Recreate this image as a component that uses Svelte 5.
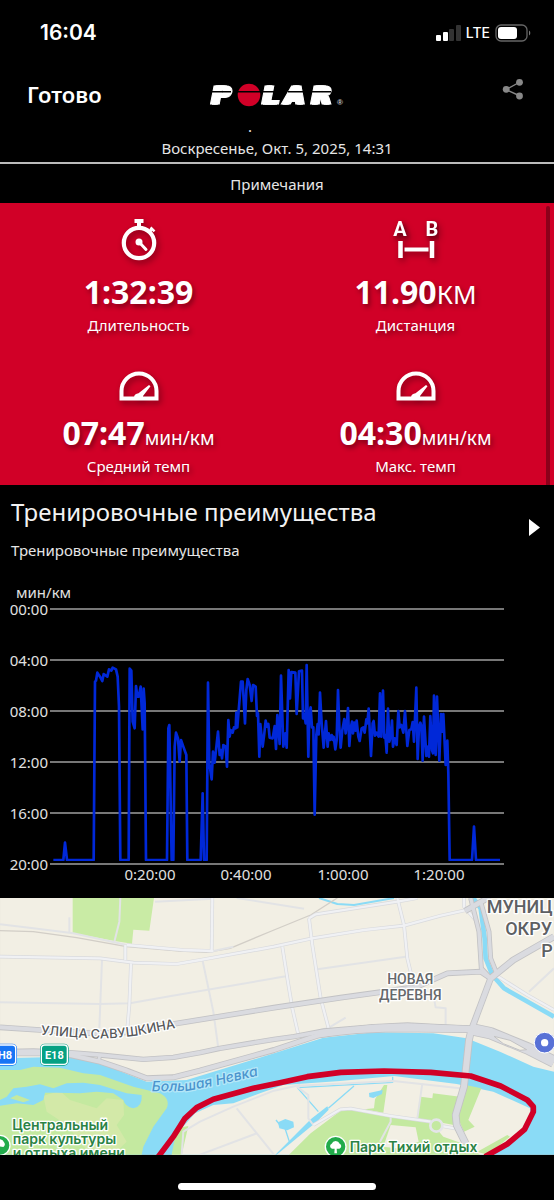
<script>
    const metrics = [
        { icon: "stopwatch", value: "1:32:39", unit: "", label: "Длительность" },
        { icon: "distance", value: "11.90", unit: "КМ", label: "Дистанция", big: true },
        { icon: "gauge", value: "07:47", unit: "мин/км", label: "Средний темп" },
        { icon: "gauge", value: "04:30", unit: "мин/км", label: "Макс. темп" },
    ];

    const paceTicks = ["00:00", "04:00", "08:00", "12:00", "16:00", "20:00"];

    const timeTicks = [
        { x: 150, label: "0:20:00" },
        { x: 246, label: "0:40:00" },
        { x: 343, label: "1:00:00" },
        { x: 439, label: "1:20:00" },
    ];

    // the trace is stored in three legs, three units to a chart pixel
    const legs = [
        {
            start: 0,
            samples: "160,660 190,660 195,608 201,660 281,660 285,125 288,122 292,98 300,110 307,123 311,102 322,110 327,88 334,92 338,83 348,88 353,110 357,200 361,660 386,660 389,86 394,92 398,245 404,265 408,138 412,170 416,170 422,140 428,268 431,146 434,190 438,660 501,660 505,265 508,255 515,660 520,660 524,320 528,278 534,295 539,365 543,300 550,320 559,345 562,660",
        },
        {
            start: 570,
            samples: "0,660 32,660 38,460 42,660 50,660 54,128 58,370 65,418 69,335 74,368 84,275 89,345 93,330 96,355 100,315 107,320 111,380 115,240 119,290 122,270 128,278 132,262 137,265 139,218 142,262 153,125 158,125 165,250 169,150 173,117 179,135 185,183 189,135 197,140 201,228 204,220 208,350 211,252 218,320 223,280 227,242 231,260 235,252 239,293 248,295 254,258 258,327 262,225 269,312 273,107 280,320 286,280 290,323 296,90 300,175 304,96 316,98 320,222 327,94 336,92 339,235 343,222 347,250 350,75 355,350 358,225 362,202 366,262 370,262 374,524 379,285 383,252 386,283 390,158 395,250 401,323 408,243 413,320 416,280 420,300 425,285 428,300 431,290 436,328 440,300 444,150 448,260 452,323 457,270 463,237 467,280 471,245 474,204 478,318 482,265 486,245 489,280 493,248 497,272 500,242 505,290 509,303 515,265 520,262 524,278 529,238 532,250",
        },
        {
            start: 1080,
            samples: "26,206 33,348 38,250 41,243 45,287 50,278 56,290 60,160 64,290 69,152 73,293 76,285 80,338 84,206 88,305 92,290 96,242 99,320 104,295 110,315 115,213 119,262 124,255 130,278 135,213 142,318 148,270 154,268 158,246 162,305 169,143 173,357 177,260 181,248 184,258 188,362 192,230 199,348 204,320 207,350 211,228 216,330 219,340 222,167 227,345 231,170 238,362 243,222 246,275 250,222 257,375 262,302 265,400 269,660 336,660 342,560 348,660 420,660",
        },
    ];

    const trace = legs
        .map((leg) =>
            leg.samples
                .split(" ")
                .map((s) => {
                    const [x, y] = s.split(",").map(Number);
                    return `${x + leg.start},${y}`;
                })
                .join(" ")
        )
        .join(" ");

    const streets = [
        "M0,88 L100,100 220,115 380,150 550,165 640,168 700,155",
        "M208,67 V112",
        "M361,9 L358,80 343,140",
        "M306,195 L298,400",
        "M608,198 L640,350 655,460",
        "M0,322 L300,327 390,325 500,305 840,247 862,243",
        "M465,20 L640,11",
        "M710,9 L912,41",
        "M952,223 L1217,185",
        "M1302,310 L1307,337 1337,340 V390",
        "M942,410 L987,398 1037,368",
        "M1587,290 L1662,220",
        "M545,779 L550,710 600,680 700,635 822,587 900,570",
        "M710,640 L822,779",
        "M600,779 L770,715",
        "M892,572 L1180,558 1380,580",
        "M890,575 L925,600 V670 L940,690",
        "M1267,565 L1252,670",
        "M1172,665 V680 L1140,740",
    ];

    const avenues = [
        "M0,185 L300,190 400,203 530,207 600,195 822,155 937,130 1092,105 1212,92 1322,62 1422,40",
        "M637,9 L635,165",
        "M380,150 L550,165 640,168",
        "M376,150 V195",
        "M393,205 L388,330 382,400",
        "M847,155 L862,250 877,340 894,415",
        "M927,70 L937,150 962,310 987,405",
        "M927,70 L947,58 1192,20 1252,9",
        "M1192,9 L1212,90 1222,190 1234,240",
        "M1487,240 L1582,300 1662,345",
        "M1392,9 V35 L1427,75",
        "M940,690 L1022,643 1052,641 1172,663 1292,680",
        "M1325,693 L1365,700",
    ];

    const highways = [
        { d: "M0,397 L120,405 280,415 380,412 515,388 822,338 1022,308 1152,290 1252,275 1342,235 1442,230 1472,250", width: 12 },
        { d: "M0,470 L100,468 200,472 300,480 430,493 520,487 600,473 660,460 822,433 882,425 972,408 1122,395 1222,390 1412,400", width: 11 },
        { d: "M0,475 H150 L210,480 300,500 380,527 440,550 520,547 600,527 822,465 952,422 1022,410 1172,403 1412,405", width: 13 },
        { d: "M952,418 L1122,399 1222,396 1412,402", width: 18 },
        { d: "M300,480 L295,500", width: 8 },
        { d: "M1412,402 L1472,415 1582,460 1662,500", width: 32 },
        { d: "M1472,250 L1415,402 ", width: 15 },
        { d: "M1472,250 L1540,195 1662,125", width: 16 },
        { d: "M1412,9 L1437,110 1444,220 1472,250", width: 10 },
        { d: "M1442,20 L1467,110 1472,190 1492,240", width: 10 },
        { d: "M1395,48 L1470,5", width: 14 },
        { d: "M1415,400 L1407,435 1392,575 1367,660 1370,690 1397,745", width: 18 },
    ];
</script>

<main>
    <div class="status">
        <span class="time">16:04</span>
        <div class="signals">
            <svg width="25" height="18" viewBox="0 0 25 18" aria-hidden="true">
                <rect x="0" y="11" width="5" height="6" rx="1" fill="#fff" />
                <rect x="7" y="8" width="5" height="9" rx="1" fill="#fff" />
                <rect x="13" y="5" width="5" height="12" rx="1" fill="#333" />
                <rect x="20" y="1" width="5" height="16" rx="1" fill="#333" />
            </svg>
            <span>LTE</span>
            <svg width="36" height="18" viewBox="0 0 36 18" aria-hidden="true">
                <rect x="1" y="1" width="31" height="16" rx="5" fill="none" stroke="#666" stroke-width="1.3" />
                <rect x="3" y="3" width="19" height="12" rx="3" fill="#fff" />
                <path d="M34 6.5v5a3 3 0 0 0 0-5z" fill="#777" />
            </svg>
        </div>
    </div>

    <header>
        <button class="done">Готово</button>
        <svg class="logo" width="136" height="32" viewBox="0 0 136 32" role="img" aria-label="Polar">
            <g class="wordmark">
                <text x="2" y="26">P</text>
                <text x="53" y="26">L</text>
                <text x="75" y="26">A</text>
                <text x="102" y="26">R</text>
            </g>
            <circle cx="41" cy="17" r="11.3" fill="#d10027" />
            <path d="M2 13.800H23M29 13.800H68M80 13.800H98M102 13.800H123" stroke="#000" stroke-width="1.6" />
            <text class="reg" x="129" y="27">®</text>
        </svg>
        <button class="share" aria-label="Поделиться">
            <svg width="22" height="22" viewBox="0 0 22 22">
                <path d="M18 4L4 11.5 18 18" fill="none" stroke="#888" stroke-width="1.4" />
                <circle cx="17.5" cy="4.3" r="3.4" fill="#888" />
                <circle cx="4.2" cy="11.3" r="3.4" fill="#888" />
                <circle cx="17.5" cy="18" r="3.4" fill="#888" />
            </svg>
        </button>
    </header>

    <p class="name">.</p>
    <p class="date">Воскресенье, Окт. 5, 2025, 14:31</p>
    <p class="notes">Примечания</p>

    <section class="metrics">
        {#each metrics as m}
            <div class="metric">
                <div class="icon">
                    {#if m.icon == "stopwatch"}
                        <svg width="40" height="44" viewBox="0 0 40 44" aria-hidden="true">
                            <circle cx="20" cy="26" r="15.2" fill="none" stroke="#fff" stroke-width="4.2" />
                            <path d="M15.500 2h9v4h-2.500v6h-4V6h-2.500z" fill="#fff" />
                            <path d="M30 15l3-3" stroke="#fff" stroke-width="3" />
                            <path d="M31.500 10.500l4 3.800" stroke="#fff" stroke-width="2.500" />
                            <circle cx="20" cy="25" r="3.500" fill="#fff" />
                            <path d="M20 25l7 7.500" stroke="#fff" stroke-width="3" stroke-linecap="round" />
                        </svg>
                    {:else if m.icon == "distance"}
                        <svg width="46" height="44" viewBox="0 0 46 44" aria-hidden="true">
                            <text class="ab" x="7" y="19" text-anchor="middle">A</text>
                            <text class="ab" x="39" y="19" text-anchor="middle">B</text>
                            <path d="M7.500 24v17M39 24v17" stroke="#fff" stroke-width="4.500" />
                            <path d="M11.500 32.500h24" stroke="#fff" stroke-width="4" />
                        </svg>
                    {:else}
                        <svg width="42" height="44" viewBox="0 0 42 44" aria-hidden="true">
                            <path d="M3.500 40.500V33a17.300 17.300 0 0 1 35 0v7.500z" fill="none" stroke="#fff" stroke-width="4" />
                            <path d="M16 39.500c0-2.500 2-4 4.500-4.300L31 27l1.500 1.300L25 38v1.500h-9z" fill="#fff" />
                        </svg>
                    {/if}
                </div>
                <p class="value">{m.value}<span class="unit" class:big={m.big}>{m.unit}</span></p>
                <p class="label">{m.label}</p>
            </div>
        {/each}
        <div class="scrollbar"></div>
    </section>

    <section class="benefit">
        <div>
            <h2>Тренировочные преимущества</h2>
            <p>Тренировочные преимущества</p>
        </div>
        <button class="more" aria-label="Подробнее">
            <svg width="12" height="18" viewBox="0 0 12 18"><path d="M0 0L11 8.500 0 17z" fill="#fff" /></svg>
        </button>
    </section>

    <svg class="chart" viewBox="0 0 554 318" role="img" aria-label="Темп">
        <defs>
            <clipPath id="plot"><rect x="0" y="0" width="1662" height="663" /></clipPath>
        </defs>
        <text x="16" y="18">мин/км</text>
        {#each paceTicks as tick, i}
            <line x1="50" x2="504" y1={29 + i * 51} y2={29 + i * 51} />
            <text x="48" y={35 + i * 51} text-anchor="end">{tick}</text>
        {/each}
        {#each timeTicks as tick}
            <text x={tick.x} y="300" text-anchor="middle">{tick.label}</text>
        {/each}
        <g transform="translate(0 60) scale(.33333)" clip-path="url(#plot)">
            <polyline points={trace} />
        </g>
    </svg>

    <svg class="map" viewBox="0 9 1662 770" role="img" aria-label="Карта маршрута">
        <defs>
            <path id="savushkina" d="M122,419 L190,424 280,431 350,429 400,423 560,393" />
            <path id="nevka" d="M455,589 L560,588 640,573 860,522" />
        </defs>
        <rect y="9" width="1662" height="770" fill="#f2efe4" />
        <path d="M218,9H462L448,107 400,104 396,146 344,138 218,114z" fill="#c9eba5" />

        <!-- river -->
        <path d="M0,490L200,485 300,505 440,560 560,555 822,475 970,428 1122,412 1300,415 1400,430 1500,470 1600,515 1662,530V779H0z" fill="#8adbf6" />
        <path d="M1420,9L1442,40 1454,130 1457,190 1477,240 1512,280 1662,365" class="canal" />
        <path d="M957,9L1012,27 1062,30 1182,9" class="brook" />

        <!-- west park -->
        <path d="M0,525L60,525 100,515 180,518 250,535 300,540 400,575 480,595Q512,612 500,640L460,695 430,755 425,779H0z" fill="#c4e9a0" />
        <path d="M130,602L180,588 210,615 290,640 320,610 370,615 372,660 350,690 380,740 340,779H270L200,690 140,650z" fill="#d3e9a8" />
        <path d="M0,615L20,605 40,580 80,575 120,568 160,580 200,565 250,563 300,570 380,595 425,600Q428,635 400,640 375,635 370,615L340,595 290,590 240,595 170,593 135,593 130,615 100,630 50,625 0,632z" fill="#8adbf6" />
        <path d="M30,610L50,600 90,615 70,622z" fill="#c4e9a0" />

        <!-- island -->
        <path d="M515,779L545,700 585,655 640,630 700,625 780,595 850,570 1020,558 1182,543 1370,567 1480,590 1590,640 1590,660 1560,710 1540,730 1480,779z" fill="#f2efe4" />
        <path d="M515,779L530,700 565,693 545,779z" fill="#c4e9a0" />
        <path d="M867,779L932,715 1022,647 1052,643 1172,665 1292,680 1330,725 1400,750 1440,779z" fill="#c4e9a0" />
        <path d="M1172,690L1247,697 1256,740 1190,760 1150,755z" fill="#f2efe4" />
        <path d="M1152,570H1162L1150,653 1092,643 1122,640 1125,613z" fill="#c4e9a0" />
        <path d="M1262,605L1297,610 1299,595 1380,605 1362,690 1252,670z" fill="#c4e9a0" />
        <path d="M1397,570L1444,580 1405,675 1424,695 1392,710 1372,665z" fill="#c4e9a0" />
        <path d="M1432,770L1522,720 1530,725 1462,779z" fill="#c4e9a0" />
        <path d="M933,672L982,634 986,644 950,680 830,779H826z" fill="#8adbf6" />
        <path d="M1107,594L1148,585 1146,597 1120,609 1108,606z" fill="#8adbf6" />
        <path d="M834,682L856,672 880,680 882,697 862,706 838,700z" fill="#8adbf6" />
        <path d="M892,578L955,650M892,578L1178,562V545M1062,573L985,640M855,700L868,740M828,675L840,690" class="ditch" />

        <path d="M0,107L100,110 230,128 380,155 540,168 620,172 690,160 822,105 932,60 1012,9" class="rail" />
        {#each streets as d}<path {d} class="street" />{/each}
        {#each avenues as d}<path {d} class="avenue-edge" />{/each}
        {#each avenues as d}<path {d} class="avenue" />{/each}
        <circle cx="1309" cy="692" r="18" fill="#c4e9a0" stroke="#e4e5e9" stroke-width="8" />
        {#each highways as h}<path d={h.d} fill="none" stroke="#c2c2c4" stroke-width={h.width + 5} stroke-linejoin="round" />{/each}
        {#each highways as h}<path d={h.d} fill="none" stroke="#dadbe0" stroke-width={h.width} stroke-linejoin="round" />{/each}
        <path d="M1482,424L1530,436 1580,464 1560,466 1510,446z" fill="#f2efe4" stroke="#c2c2c4" stroke-width="3" />

        <path class="route" d="M475,785L520,725 555,670 590,638 640,613 760,580 840,563 922,545 1022,532 1152,528 1292,532 1412,543 1502,573 1582,615 1600,635 1600,650 1574,703 1522,747 1455,785" />

        <g class="shield">
            <rect x="-50" y="446" width="101" height="66" rx="14" fill="#1875f5" />
            <rect x="-46" y="450" width="93" height="58" rx="10" fill="none" stroke="#fff" stroke-width="4" />
            <text x="36" y="492" text-anchor="end">H8</text>
            <rect x="120" y="446" width="86" height="66" rx="14" fill="#06a183" />
            <rect x="124" y="450" width="78" height="58" rx="10" fill="none" stroke="#fff" stroke-width="4" />
            <text x="163" y="492" text-anchor="middle">E18</text>
        </g>

        <text class="street-name"><textPath href="#savushkina">УЛИЦА САВУШКИНА</textPath></text>
        <text class="river-name"><textPath href="#nevka">Большая Невка</textPath></text>
        <text class="district" x="1231" y="267" text-anchor="middle">НОВАЯ</text>
        <text class="district" x="1231" y="315" text-anchor="middle">ДЕРЕВНЯ</text>
        <text class="okrug" x="1658" y="55" text-anchor="end">МУНИЦ</text>
        <text class="okrug" x="1656" y="121" text-anchor="end">ОКРУ</text>
        <text class="okrug" x="1658" y="187" text-anchor="end">Р</text>

        <circle cx="1634" cy="443" r="31" fill="#5871d6" stroke="#fff" stroke-width="3" />
        <circle cx="1634" cy="443" r="11" fill="#fff" />

        <circle cx="0" cy="751" r="30" fill="#22ab4b" stroke="#fff" stroke-width="4" />
        <path d="M-18,752a10 10 0 0 1 6-14 14 14 0 0 1 24 4 9 9 0 0 1-2 14z" fill="#fff" />
        <text class="park" x="37" y="705">Центральный</text>
        <text class="park" x="38" y="748">парк культуры</text>
        <text class="park" x="38" y="790">и отдыха имени</text>

        <circle cx="1007" cy="755" r="31" fill="#22ab4b" stroke="#fff" stroke-width="4" />
        <path d="M996,761a8 8 0 0 1-1-15 13 13 0 0 1 24 0 8 8 0 0 1-1 15h-8l1 14h-8l1-14z" fill="#fff" />
        <text class="park" x="1049" y="771">Парк Тихий отдых</text>
    </svg>

    <footer><div class="home"></div></footer>
</main>

<style>
    :global(body) {
        margin: 0;
        background: #000;
    }

    main {
        background: #000;
        color: #e6e6e6;
        font-family: "Noto Sans", "Open Sans", sans-serif;
        font-size: 15px;
        line-height: 20px;
    }

    p,
    h2 {
        margin: 0;
        font-weight: 400;
    }

    button {
        padding: 0;
        border: none;
        background: transparent;
        color: #fff;
        font-family: inherit;
        cursor: pointer;
    }

    svg {
        display: block;
    }

    .status {
        display: flex;
        align-items: center;
        justify-content: space-between;
        height: 66px;
        padding: 0 23px 0 40px;
        color: #fff;
        font-family: Inter, sans-serif;
    }

    .time {
        font-size: 21px;
        font-weight: 600;
    }

    .signals {
        display: flex;
        align-items: center;
        gap: 5px;
        font-size: 14px;
        font-weight: 500;
    }

    header {
        display: grid;
        grid-template-columns: 1fr auto 1fr;
        align-items: center;
        height: 56px;
        padding: 0 30px 0 27px;
    }

    .done {
        justify-self: start;
        font-size: 22px;
        font-weight: 600;
        line-height: 28px;
    }

    .share {
        justify-self: end;
        padding-bottom: 10px;
    }

    .logo {
        overflow: visible;
    }

    .wordmark {
        fill: #fff;
        stroke: #fff;
        stroke-width: 1;
        font: italic 700 25px "DejaVu Sans", sans-serif;
        filter: drop-shadow(2px 0 0 #fff) drop-shadow(2px 0 0 #fff);
    }

    .reg {
        fill: #ccc;
        font: 700 8px "Liberation Sans", sans-serif;
    }

    .name {
        height: 14px;
        padding-right: 54px;
        line-height: 8px;
        text-align: center;
    }

    .date {
        padding: 2px 0 4px;
        border-bottom: 2px solid #bbb;
        text-align: center;
    }

    .notes {
        padding: 10px 0 9px;
        text-align: center;
    }

    .metrics {
        position: relative;
        display: grid;
        grid-template-columns: 1fr 1fr;
        background: #d10027;
        color: #fff;
        text-align: center;
        text-shadow: 2px 3px 5px rgba(0, 0, 0, 0.4);
    }

    .metric {
        padding: 14px 0 8px;
    }

    .icon {
        display: flex;
        justify-content: center;
        filter: drop-shadow(2px 3px 3px rgba(0, 0, 0, 0.4));
    }

    .ab {
        fill: #fff;
        font: 700 20px Roboto, sans-serif;
    }

    .value {
        padding-top: 11px;
        font-size: 32px;
        font-weight: 700;
        line-height: 40px;
    }

    .unit {
        font-size: 19px;
        font-weight: 400;
        line-height: 20px;
    }

    .unit.big {
        font-size: 26px;
    }

    .label {
        padding-top: 2px;
        line-height: 22px;
    }

    .scrollbar {
        position: absolute;
        top: 3px;
        right: 4px;
        bottom: 0;
        width: 4px;
        border-radius: 2px 2px 0 0;
        background: #8b001a;
    }

    .benefit {
        display: flex;
        align-items: center;
        justify-content: space-between;
        padding: 11px 13px 20px 11px;
    }

    h2 {
        color: #f2f2f2;
        font-size: 24px;
        line-height: 32px;
        margin-bottom: 12px;
    }

    .chart {
        width: 100%;
    }

    .chart text {
        fill: #e0e0e0;
    }

    .chart line {
        stroke: #777;
        stroke-width: 2;
    }

    .chart polyline {
        fill: none;
        stroke: #0028d8;
        stroke-width: 8;
        stroke-linejoin: round;
    }

    .map {
        width: 100%;
    }

    .map text {
        paint-order: stroke;
        stroke: #fff;
        stroke-width: 8;
        stroke-linejoin: round;
        font-family: Inter, Roboto, sans-serif;
    }

    .canal,
    .brook,
    .ditch,
    .rail,
    .street,
    .avenue,
    .avenue-edge,
    .route {
        fill: none;
        stroke-linejoin: round;
    }

    .canal {
        stroke: #8adbf6;
        stroke-width: 14;
    }

    .brook {
        stroke: #8adbf6;
        stroke-width: 6;
    }

    .ditch {
        stroke: #8adbf6;
        stroke-width: 4;
    }

    .rail {
        stroke: #d2cec7;
        stroke-width: 4;
    }

    .street {
        stroke: #e2e3e5;
        stroke-width: 6;
    }

    .avenue-edge {
        stroke: #d9dadd;
        stroke-width: 11;
    }

    .avenue {
        stroke: #f0f1f4;
        stroke-width: 7;
    }

    .route {
        stroke: #d10027;
        stroke-width: 17;
    }

    .map .shield text {
        fill: #fff;
        stroke: none;
        font-family: Roboto, sans-serif;
        font-size: 33px;
        font-weight: 700;
    }

    .map .street-name {
        fill: #58595b;
        font-size: 39px;
        font-weight: 500;
    }

    .map .river-name {
        fill: #4b94cd;
        stroke: #b5e7f8;
        font-size: 42px;
        font-style: italic;
        font-weight: 500;
    }

    .map .district {
        fill: #65686b;
        font-family: Roboto, sans-serif;
        font-size: 42px;
        font-weight: 500;
    }

    .map .okrug {
        fill: #5d6063;
        font-family: Roboto, sans-serif;
        font-size: 54px;
        font-weight: 500;
    }

    .map .park {
        fill: #2b8345;
        font-size: 42px;
        font-weight: 600;
    }

    footer {
        display: flex;
        justify-content: center;
        padding: 28px 0 11px;
    }

    .home {
        width: 198px;
        height: 7px;
        border-radius: 4px;
        background: #fff;
    }
</style>
